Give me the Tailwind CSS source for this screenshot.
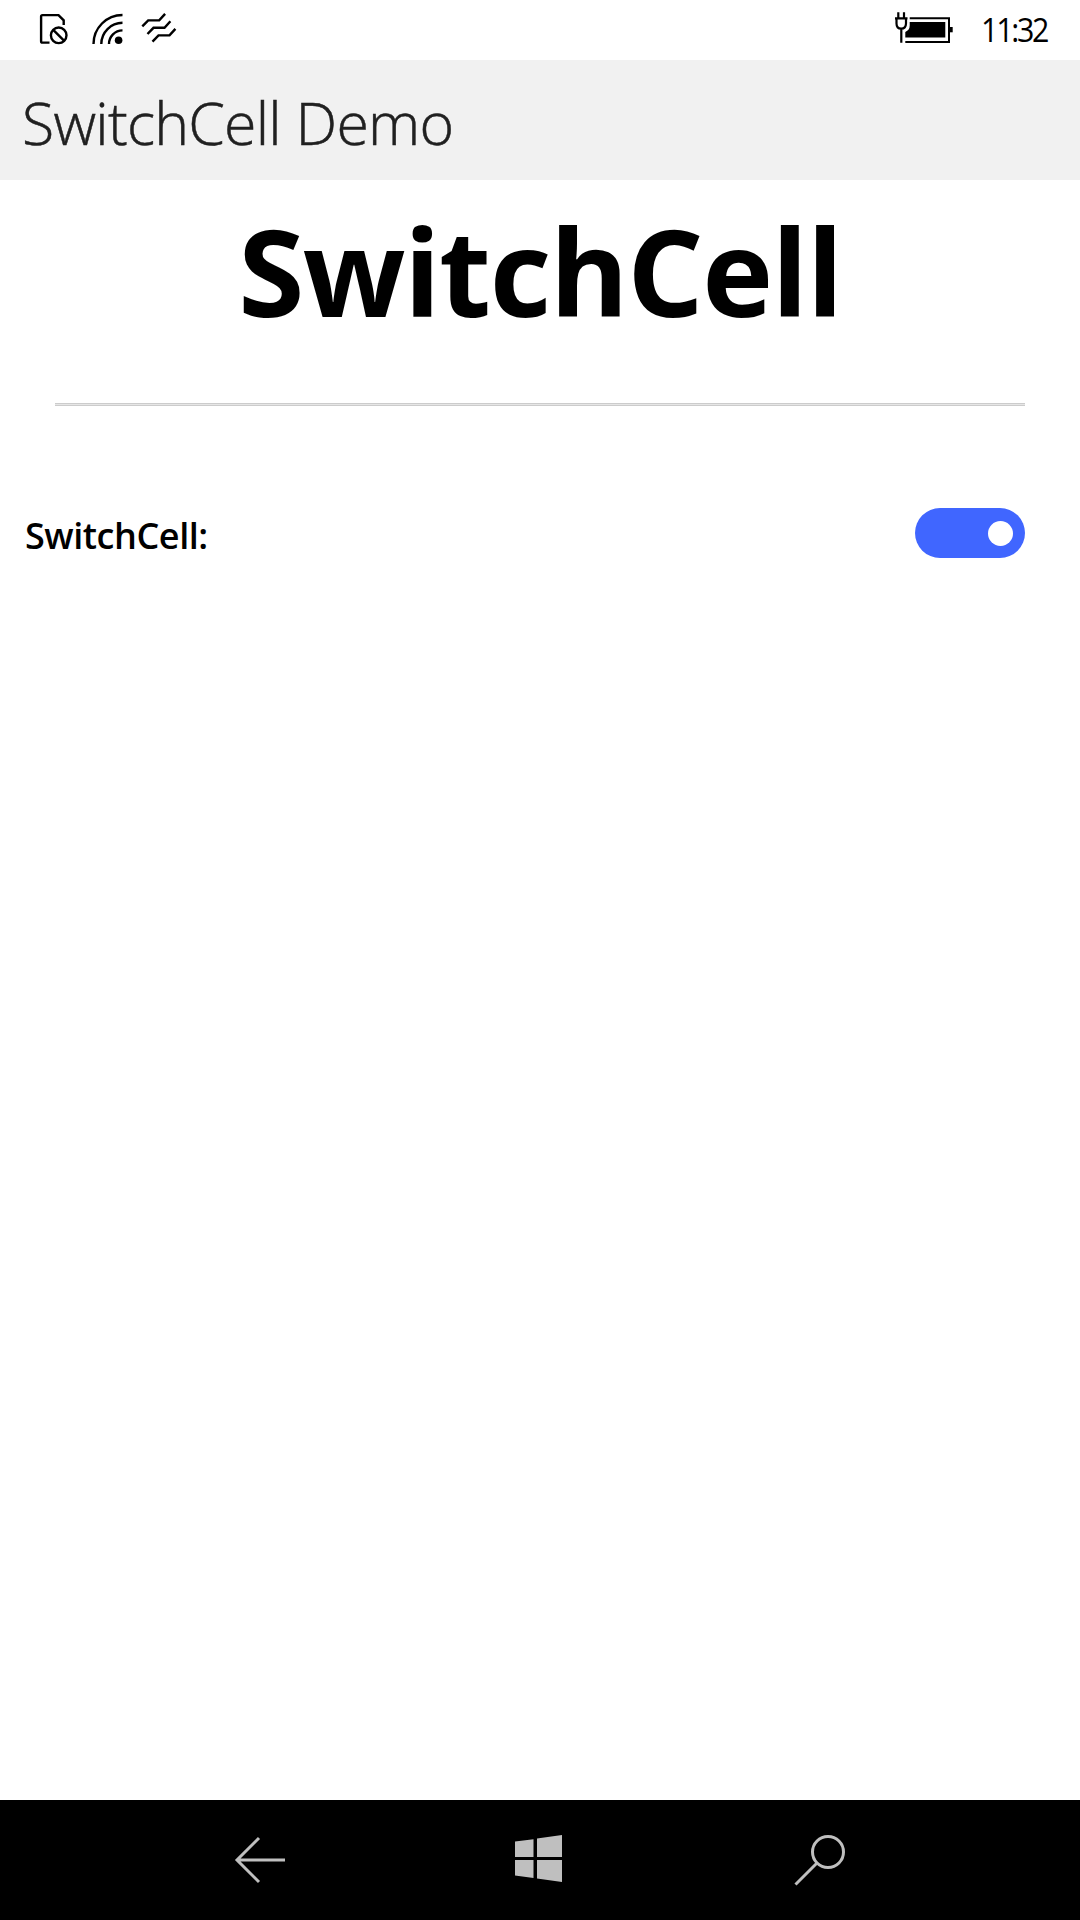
<!DOCTYPE html>
<html lang="en">
<head>
<meta charset="utf-8">
<title>SwitchCell Demo</title>
<script src="https://cdn.jsdelivr.net/npm/@tailwindcss/browser@4"></script>
</head>
<body class="flex h-[1920px] w-[1080px] flex-col overflow-hidden bg-white font-['Open_Sans','Noto_Sans',sans-serif] text-black">
  <!-- Status bar -->
  <div class="flex h-[60px] shrink-0 justify-between pr-8">
    <svg class="h-[60px] w-[180px]" viewBox="0 0 180 60" fill="none" stroke="#000" stroke-width="2.4">
      <path d="M49.500 42.600H42.500Q41.100 42.600 41.100 41.200V16.500Q41.100 15.100 42.500 15.100H58.500L63.700 20.300V25"/>
      <circle cx="58.700" cy="35.300" r="7.800"/>
      <path d="M53.200 29.800l11 11"/>
      <path d="M93.500 44A29 29 0 0 1 122.500 15M101.300 44A21.300 21.300 0 0 1 122.500 22.800M109 44A13.600 13.600 0 0 1 122.500 30.400"/>
      <circle cx="118.600" cy="40.200" r="3.800" fill="#000" stroke="none"/>
      <path d="M142.300 26.300l5.900-5.900h11l5.900-6.500M147.500 34l6-6.200h11l5.900-6.500M152.500 41.600l6-6.200h11l5.900-6.500"/>
    </svg>
    <div class="flex">
      <svg class="h-[60px] w-[87px]" viewBox="895 0 87 60">
        <path d="M909.700 18.200H949V42H905.300" fill="none" stroke="#000" stroke-width="2"/>
        <path d="M909.700 22H945.300V37.500H905.300V32Q909.700 30 909.700 25.500z"/>
        <path d="M950 27h2.700v5.300H950z"/>
        <path d="M898.300 12.300V18M904 12.300V18M895 18.300H907.500M896.500 18V23.500Q896.500 28.700 901.200 28.700T906 23.500V18M901.300 28.700V42.700" fill="none" stroke="#000" stroke-width="2.200"/>
      </svg>
      <div class="h-[60px] w-[66px] origin-left scale-x-[0.95] text-[32px] leading-[59px] tracking-[-2.400px] whitespace-nowrap indent-[-1px]">11:32</div>
    </div>
  </div>

  <!-- Title bar -->
  <header class="flex h-[120px] shrink-0 items-center bg-[#f1f1f1] pt-1 pl-[22px]">
    <div class="text-[59px] leading-[116px] font-light tracking-[-0.750px] whitespace-nowrap text-[#202020] [-webkit-text-stroke:0.5px_#202020]">SwitchCell Demo</div>
  </header>

  <main class="flex flex-1 flex-col">
    <h1 class="h-[223px] text-center text-[120px] leading-[181px] font-bold tracking-[-1.500px] whitespace-nowrap">SwitchCell</h1>
    <div class="mx-[55px] h-[3px] border-y border-[#cccccc] bg-[#e6e6e6]"></div>
    <div class="mt-[102px] flex h-[50px] items-center justify-between pr-[55px] pl-[25px]">
      <div class="pt-[6px] text-[36px] leading-[50px] font-semibold tracking-[-0.450px] whitespace-nowrap">SwitchCell:</div>
      <div class="flex h-[50px] w-[110px] items-center justify-end rounded-full bg-[#4066ff] pr-3">
        <div class="size-[25px] rounded-full bg-white"></div>
      </div>
    </div>
  </main>

  <!-- Navigation bar -->
  <nav class="h-[120px] shrink-0 bg-black">
    <svg class="h-[120px] w-[1080px]" viewBox="0 1800 1080 120" fill="none" stroke="#bfbfbf" stroke-width="3">
      <path d="M259 1838l-22 22 22 22M237 1860h48"/>
      <path d="M515 1841.500l18.500-2.300V1857H515zM537 1838.500l25-3.500v22h-25zM515 1860h18.500v18L515 1875.500zM537 1860h25v22l-25-3.500z" fill="#bfbfbf" stroke="none"/>
      <circle cx="828" cy="1852" r="15.500"/>
      <path d="M817 1863l-21.500 21.500"/>
    </svg>
  </nav>
</body>
</html>
